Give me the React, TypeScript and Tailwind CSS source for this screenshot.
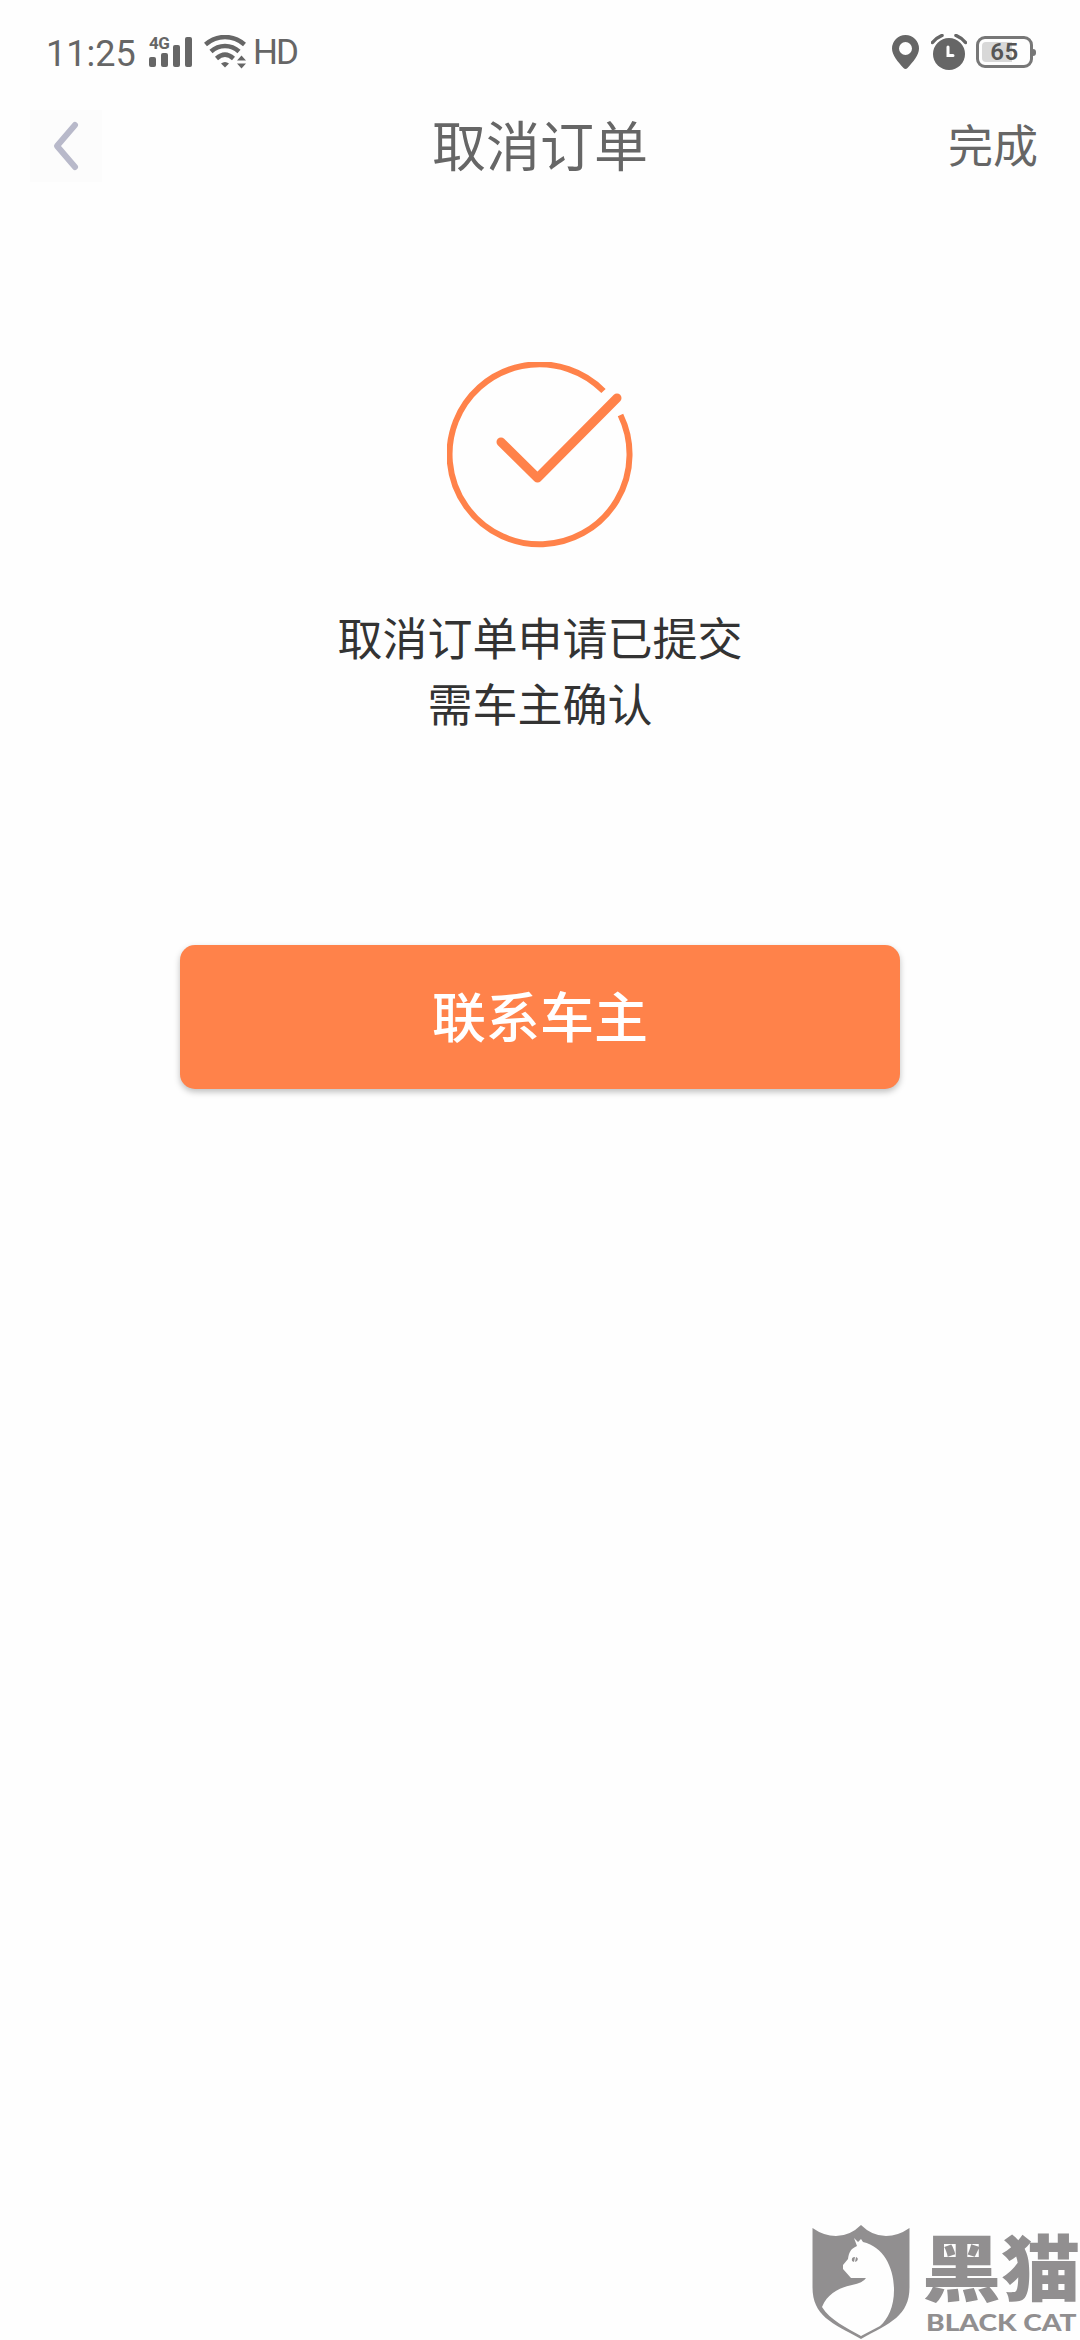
const signalBars = [
  { x: 0, height: 10 },
  { x: 12, height: 14 },
  { x: 24, height: 22 },
  { x: 36, height: 30 },
];

function SignalIcon() {
  return (
    <div className="relative ml-[14px] h-8 w-[43px]">
      <svg className="h-8 w-[43px]" viewBox="0 0 43 32" fill="#666" aria-hidden="true">
        {signalBars.map((bar) => (
          <rect key={bar.x} x={bar.x} y={31 - bar.height} width="7" height={bar.height} rx="2" />
        ))}
      </svg>
      <span className="absolute -top-px left-0 font-[Roboto] text-[17px] leading-[16px] font-bold tracking-[-0.5px]">
        4G
      </span>
    </div>
  );
}

function WifiIcon() {
  return (
    <svg className="ml-3 h-[34px] w-[42px]" viewBox="0 0 42 34" fill="none" aria-hidden="true">
      <g stroke="#666" strokeWidth="4.5">
        <path d="M1.5 9.5C13-.5 29-.5 40.500 9.500" />
        <path d="M7 16.500C15 9 27 9 35 16.500" />
        <path d="M12.500 23.500C18 18.500 24 18.500 29.500 23.500" />
      </g>
      <path d="M17 28.500Q21 25.500 25 28.500L21 32.500Z" fill="#666" />
      <path d="M33 25.500L37.500 20.500L42 25.500ZM33 28.500H42L37.500 33.500Z" fill="#666" />
    </svg>
  );
}

function StatusBar() {
  return (
    <div className="flex h-[104px] items-center justify-between pr-[44px] pl-[46px] text-[#666]">
      <div className="flex items-center font-[Roboto]">
        <span className="mt-1 w-[89px] text-[36px] leading-none">11:25</span>
        <SignalIcon />
        <WifiIcon />
        <span className="ml-[7px] text-[35px] leading-none tracking-[-2px]">HD</span>
      </div>

      <div className="flex items-center">
        <svg className="h-[34px] w-[27px]" viewBox="0 0 27 34" aria-hidden="true">
          <path
            d="M13.500 0A13.500 13.500 0 0 0 0 13.500C0 20 6 27 11.500 33Q13.500 35 15.500 33C21 27 27 20 27 13.500A13.500 13.500 0 0 0 13.500 0ZM13.500 7A6.500 6.500 0 1 1 13.500 20A6.500 6.500 0 0 1 13.500 7Z"
            fill="#666"
            fillRule="evenodd"
          />
        </svg>
        <svg className="ml-3 h-9 w-9" viewBox="0 0 36 36" fill="none" aria-hidden="true">
          <circle cx="18" cy="20" r="16" fill="#666" />
          <path d="M1.500 8.500Q5 4 11 1.500M34.500 8.500Q31 4 25 1.500" stroke="#666" strokeWidth="3.5" strokeLinecap="round" />
          <path d="M17 13V21.500H22" stroke="#fff" strokeWidth="3" strokeLinecap="round" />
        </svg>
        <div className="ml-[9px] flex items-center">
          <div className="relative flex h-8 w-[57px] items-center justify-center rounded-[9px] border-[3px] border-[#777]">
            <div className="absolute top-[3px] left-[3px] h-5 w-[30px] rounded-l-[4px] bg-[#d8d8d8]" />
            <span className="relative font-[Roboto] text-[24px] leading-none font-semibold tracking-[0.5px] text-[#555]">
              65
            </span>
          </div>
          <div className="h-[7px] w-[3px] rounded-r-[3px] bg-[#777]" />
        </div>
      </div>
    </div>
  );
}

function Header() {
  return (
    <header className="grid h-[84px] grid-cols-[1fr_auto_1fr] items-center px-[30px] text-[#666]">
      <button type="button" aria-label="返回" className="flex size-[72px] items-center justify-center bg-[#fcfcfc]">
        <svg className="size-[72px]" viewBox="0 0 72 72" fill="none" aria-hidden="true">
          <path
            d="M45 15L27 36L45 57"
            stroke="#b8b9ca"
            strokeWidth="6"
            strokeLinecap="round"
            strokeLinejoin="round"
          />
        </svg>
      </button>
      <h1 className="pb-1 text-[54px] leading-none">取消订单</h1>
      <button type="button" className="justify-self-end pr-3 pb-[5px] text-[45px] leading-none">
        完成
      </button>
    </header>
  );
}

function SuccessIcon() {
  return (
    <svg className="size-[186px]" viewBox="0 0 186 186" fill="none" stroke="#ff824a" aria-hidden="true">
      <path d="M156.500 29A90 90 0 1 0 173.500 53" strokeWidth="6" />
      <path d="M54 80L90.500 116L170 36" strokeWidth="9" strokeLinecap="round" strokeLinejoin="round" />
    </svg>
  );
}

function BlackCatMark() {
  return (
    <div className="flex text-[#918f90]">
      <svg className="h-[115px] w-[98px]" viewBox="0 0 98 115" aria-hidden="true">
        <path
          d="M.5 3Q12 11 24 11Q38 11 49 0Q60 11 74 11Q86 11 97.500 3V62C97.500 91 78 98 49 114C20 98 .5 91 .5 62Z"
          fill="currentColor"
        />
        <path
          d="M42 13L46 17L49 14L51 17C72 22 82 43 82 65C82 82 76 94 68 101L49 111C35 103 18 95 10 82C16 68 27 63 40 60Q51 58 54 53H39L31 44V40L36 34C37 28 38 24 45 21Z"
          fill="#fefefe"
        />
        <path d="M40 36Q39 32 43 32L42 37ZM44 32Q47 33 45 36L43 37Z" fill="currentColor" />
      </svg>
      <div className="ml-4 flex w-[154px] flex-col pt-[7px]">
        <div className="-ml-1 h-[76px] w-[154px]">
          <span className="block origin-left scale-x-[1.07] scale-y-[0.96] text-[74px] leading-[64px] font-black whitespace-nowrap">
            黑猫
          </span>
        </div>
        <span className="mt-[2px] block origin-left scale-x-[1.25] font-[Lato] text-[22.5px] leading-[26px] font-black whitespace-nowrap">
          BLACK CAT
        </span>
      </div>
    </div>
  );
}

export default function App() {
  return (
    <div
      lang="zh-CN"
      className="flex h-[2340px] w-[1080px] flex-col overflow-hidden bg-[#fefefe] font-['Noto_Sans_CJK_SC',sans-serif]"
    >
      <StatusBar />
      <Header />

      <main className="flex flex-1 flex-col items-center pt-[174px]">
        <SuccessIcon />
        <p className="mt-14 text-center text-[45px] leading-[66px] text-[#333]">
          取消订单申请已提交
          <br />
          需车主确认
        </p>
        <button
          type="button"
          className="mt-[209px] flex h-36 w-[720px] items-center justify-center rounded-[15px] bg-[#ff824a] pb-[5px] text-[54px] leading-none font-medium text-white shadow-[0_3px_6px_rgba(0,0,0,0.25)]"
        >
          联系车主
        </button>
      </main>

      <footer className="flex justify-end">
        <BlackCatMark />
      </footer>
    </div>
  );
}
